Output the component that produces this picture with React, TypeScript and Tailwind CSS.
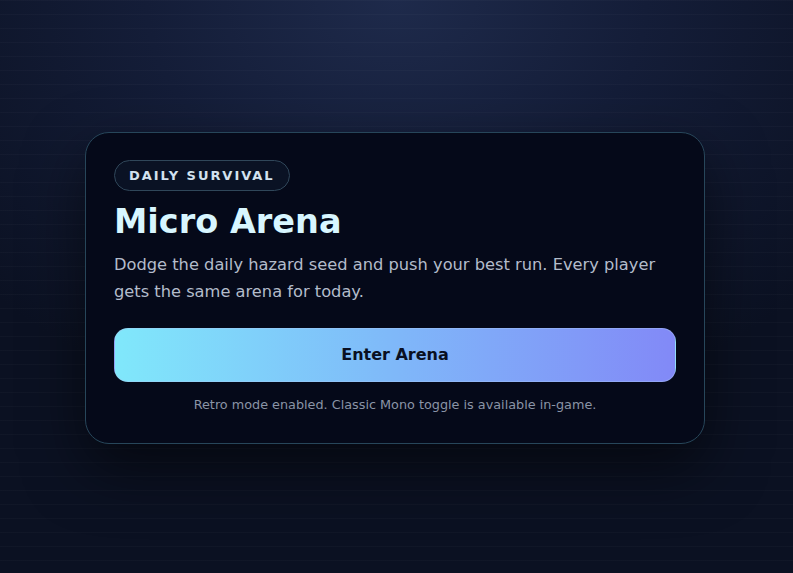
import React from 'react';

export default function App() {
  return (
    <div className="relative w-screen h-screen overflow-hidden bg-[#0b1122] font-['DejaVu_Sans',sans-serif] flex items-center justify-center">
      {/* backdrop glow + scanlines */}
      <div className="absolute inset-0 bg-[radial-gradient(ellipse_70%_75%_at_50%_0%,#1e2a4b_0%,#141d38_45%,#0b1122_100%)]" />
      <div className="absolute inset-0 bg-[repeating-linear-gradient(to_bottom,rgba(255,255,255,0.025)_0px,rgba(255,255,255,0.025)_1px,transparent_1px,transparent_14px)]" />

      <div className="relative mr-[3px] mt-[3px] w-[620px] rounded-[24px] border border-[#27465a] bg-[#050919] px-[28px] pt-[27px] pb-[29px] shadow-[0_24px_60px_rgba(0,0,0,0.55)]">
        <div className="inline-flex h-[31px] items-center rounded-full border border-[#30475a] bg-[#0a1224] px-[14px]">
          <span className="text-[13px] font-bold tracking-[0.15em] text-[#d3e2ef]">DAILY SURVIVAL</span>
        </div>

        <h1 className="mt-[10px] text-[33.5px] font-bold leading-[42px] text-[#d8f6ff]">Micro Arena</h1>

        <p className="mt-[8px] text-[16.25px] leading-[27px] text-[#b3bccb]">
          Dodge the daily hazard seed and push your best run. Every player gets the same arena for today.
        </p>

        <button className="mt-[23px] flex h-[54px] w-full items-center justify-center rounded-[14px] border border-[#a9c8f5]/40 bg-[linear-gradient(to_right,#80e8fb,#7fb8f9_50%,#8289f7)] text-[16px] font-bold text-[#0a1022]">
          Enter Arena
        </button>

        <p className="mt-[14px] text-center text-[12.8px] leading-[18px] text-[#8a94a6]">
          Retro mode enabled. Classic Mono toggle is available in-game.
        </p>
      </div>
    </div>
  );
}
